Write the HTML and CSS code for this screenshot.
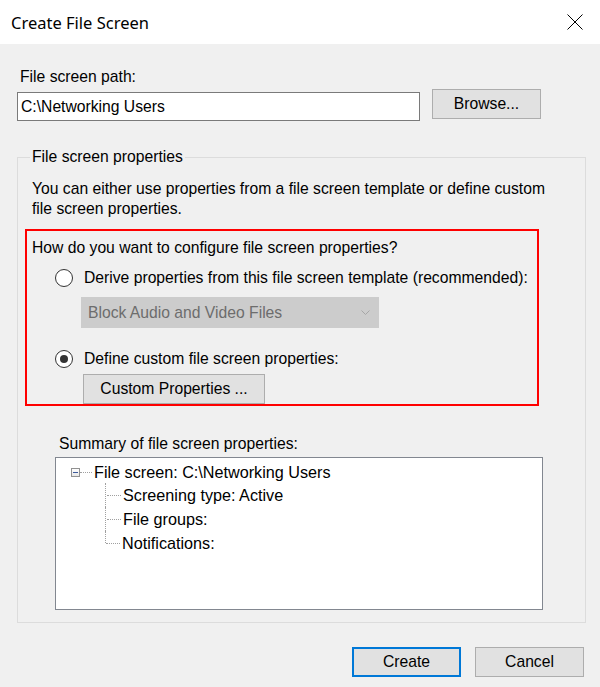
FILE: index.html
```html
<!DOCTYPE html>
<html lang="en">
<head>
<meta charset="utf-8">
<title>Create File Screen</title>
<link rel="stylesheet" href="styles.css">
</head>
<body>
<div class="window">
  <div class="titlebar">
    <span class="title">Create File Screen</span>
    <svg class="close" width="16" height="16" viewBox="0 0 16 16"><path d="M0.5 0.5 L15.5 15.5 M15.5 0.5 L0.5 15.5" stroke="#000" stroke-width="1" fill="none"/></svg>
  </div>
  <div class="content">
    <div class="path-label">File screen path:</div>
    <div class="path-row">
      <div class="textbox">C:\Networking Users</div>
      <button class="btn browse">Browse...</button>
    </div>
    <fieldset class="group">
      <legend class="group-title">File screen properties</legend>
      <p class="desc">You can either use properties from a file screen template or define custom file screen properties.</p>
      <div class="highlight">
        <div class="question">How do you want to configure file screen properties?</div>
        <div class="radio-row first"><span class="radio"></span><span>Derive properties from this file screen template (recommended):</span></div>
        <div class="combo">
          <span>Block Audio and Video Files</span>
          <svg class="chev" width="9" height="5" viewBox="0 0 9 5"><path d="M0.5 0.5 L4.5 4.5 L8.5 0.5" stroke="#a6a6a6" stroke-width="1" fill="none"/></svg>
        </div>
        <div class="radio-row second"><span class="radio checked"></span><span>Define custom file screen properties:</span></div>
        <button class="btn custom">Custom Properties ...</button>
      </div>
      <div class="summary-label">Summary of file screen properties:</div>
      <div class="tree">
        <div class="tree-root">
          <span class="expander"><span class="minus"></span></span>
          <span class="root-line"></span>
          <span class="node-text">File screen: C:\Networking Users</span>
        </div>
        <ul class="children">
          <li>Screening type: Active</li>
          <li>File groups:</li>
          <li>Notifications:</li>
        </ul>
      </div>
    </fieldset>
    <div class="buttons">
      <button class="btn primary">Create</button>
      <button class="btn">Cancel</button>
    </div>
  </div>
</div>
</body>
</html>
```
FILE: styles.css
```css
html, body {
  margin: 0;
  padding: 0;
}
body {
  width: 600px;
  height: 687px;
  overflow: hidden;
  background: #f0f0f0;
  font-family: "Liberation Sans", Arial, sans-serif;
  font-size: 15.7px;
  color: #000;
}
.window {
  width: 600px;
  height: 687px;
  background: #f0f0f0;
}
.titlebar {
  height: 44px;
  background: #fff;
  display: flex;
  align-items: center;
  justify-content: space-between;
  padding: 0 17px 0 11px;
}
.title {
  font-family: "Noto Sans", "Open Sans", sans-serif;
  font-size: 16.5px;
}
.close {
  display: block;
}
.content {
  padding: 24px 0 0 17px;
}
.path-label {
  line-height: 18px;
  margin-left: 3px;
}
.path-row {
  display: flex;
  align-items: flex-start;
  margin-top: 3px;
}
.textbox {
  box-sizing: border-box;
  width: 403px;
  height: 29px;
  margin-top: 3px;
  border: 1px solid #7a7a7a;
  background: #fff;
  padding-left: 3px;
  line-height: 27px;
}
.btn {
  box-sizing: border-box;
  height: 30px;
  background: #e1e1e1;
  border: 1px solid #adadad;
  font-family: "Liberation Sans", Arial, sans-serif;
  font-size: 15.7px;
  color: #000;
  padding: 0;
  margin: 0;
}
.browse {
  width: 109px;
  margin-left: 12px;
}
.group {
  box-sizing: border-box;
  width: 569px;
  margin: 27px 0 0 0;
  border: 1px solid #dcdcdc;
  padding: 12px 0 12px 14px;
}
.group-title {
  padding: 0 2px;
  margin-left: -2px;
  line-height: 18px;
}
.desc {
  margin: 0;
  padding-top: 1px;
  line-height: 20px;
  max-width: 530px;
}
.highlight {
  box-sizing: border-box;
  width: 514px;
  margin: 10px 0 0 -7px;
  border: 2px solid #ff0000;
  padding: 8px 0 0 5px;
}
.question {
  line-height: 18px;
}
.radio-row {
  display: flex;
  align-items: center;
  height: 20px;
  padding-left: 23px;
}
.radio-row.first {
  margin-top: 11px;
}
.radio-row.second {
  margin-top: 21px;
}
.radio {
  box-sizing: border-box;
  width: 18px;
  height: 18px;
  border: 1px solid #333;
  border-radius: 50%;
  background: #fff;
  margin-right: 11px;
  display: flex;
  align-items: center;
  justify-content: center;
}
.radio.checked::after {
  content: "";
  width: 8px;
  height: 8px;
  border-radius: 50%;
  background: #333;
}
.combo {
  box-sizing: border-box;
  width: 298px;
  height: 31px;
  margin: 9px 0 0 49px;
  background: #cccccc;
  color: #6d6d6d;
  display: flex;
  align-items: center;
  justify-content: space-between;
  padding: 0 9px 0 7px;
}
.chev {
  display: block;
}
.custom {
  display: block;
  width: 182px;
  margin: 5px 0 0 51px;
}
.summary-label {
  line-height: 18px;
  margin: 29px 0 0 27px;
}
.tree {
  box-sizing: border-box;
  width: 488px;
  height: 153px;
  margin: 4px 0 0 23px;
  border: 1px solid #828790;
  background: #fff;
  padding-top: 2px;
  font-size: 16.2px;
}
.tree-root {
  display: flex;
  align-items: center;
  height: 24px;
  padding-left: 15px;
}
.expander {
  box-sizing: border-box;
  width: 9px;
  height: 9px;
  border: 1px solid #919191;
  background: linear-gradient(#ffffff, #e6e6e6);
  display: flex;
  align-items: center;
  justify-content: center;
}
.minus {
  width: 5px;
  height: 1px;
  background: #3c5a9a;
}
.root-line {
  width: 12px;
  border-top: 1px dotted #a0a0a0;
}
.node-text {
  margin-left: 2px;
}
.children {
  list-style: none;
  margin: -1px 0 0 49px;
  padding: 0;
}
.children li {
  position: relative;
  height: 24px;
  line-height: 24px;
  padding-left: 17px;
  border-left: 1px dotted #a0a0a0;
}
.children li:last-child {
  border-left: none;
}
.children li:last-child::after {
  content: "";
  position: absolute;
  left: 0;
  top: 0;
  height: 12px;
  border-left: 1px dotted #a0a0a0;
}
.children li::before {
  content: "";
  position: absolute;
  left: 1px;
  top: 12px;
  width: 14px;
  border-top: 1px dotted #a0a0a0;
}
.buttons {
  display: flex;
  justify-content: flex-end;
  gap: 14px;
  margin-top: 24px;
  padding-right: 16px;
}
.buttons .btn {
  width: 109px;
}
.btn.primary {
  border: 2px solid #0078d7;
}
```
